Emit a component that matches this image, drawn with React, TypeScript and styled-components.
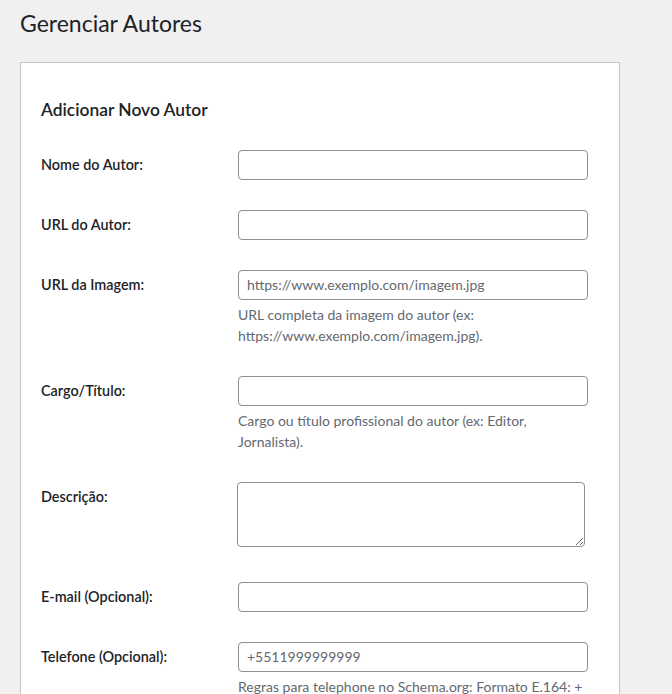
import React from "react";
import styled, { createGlobalStyle } from "styled-components";

const Global = createGlobalStyle`
  html, body { margin: 0; padding: 0; background: #f0f0f1; }
  body { font-family: "Segoe UI", Lato, "Noto Sans", sans-serif; color: #1d2327; font-size: 14px; }
  * { box-sizing: border-box; }
`;

const Wrap = styled.div`
  padding: 0 52px 0 20px;
`;

const Title = styled.h1`
  font-size: 23px;
  font-weight: 400;
  line-height: 1.3;
  margin: 0;
  padding: 9px 0 4px;
  color: #1d2327;
`;

const Card = styled.div`
  margin-top: 19px;
  width: 600px;
  background: #fff;
  border: 1px solid #c3c4c7;
  padding: 36px 20px 0 20px;
`;

const CardTitle = styled.h2`
  font-size: 17.4px;
  font-weight: 600;
  line-height: 22px;
  margin: 0 0 14px;
  color: #1d2327;
`;

const Row = styled.div`
  display: grid;
  grid-template-columns: 197px 1fr;
  padding: 15px 0;
`;

const Label = styled.label`
  font-size: 14.4px;
  font-weight: 600;
  line-height: 20px;
  padding-top: 5px;
  color: #1d2327;
`;

const Field = styled.div`
  display: flex;
  flex-direction: column;
`;

const Input = styled.input`
  width: 350px;
  height: 30px;
  border: 1px solid #8c8f94;
  border-radius: 4px;
  padding: 0 8px;
  font-family: inherit;
  font-size: 14px;
  color: #2c3338;
  background: #fff;
  margin: 0;
  &::placeholder { color: #646970; }
`;

const TextArea = styled.textarea`
  display: block;
  width: 348px;
  height: 65px;
  margin: 0 0 5px -1px;
  border: 1px solid #8c8f94;
  border-radius: 4px;
  padding: 2px 6px;
  font-family: inherit;
  font-size: 14px;
  background: #fff;
`;

const Description = styled.p`
  margin: 4px 0 0;
  max-width: 350px;
  font-size: 14px;
  line-height: 21px;
  color: #646970;
`;

type FieldDef = {
  label: string;
  placeholder?: string;
  description?: string;
  multiline?: boolean;
};

const fields: FieldDef[] = [
  { label: "Nome do Autor:" },
  { label: "URL do Autor:" },
  {
    label: "URL da Imagem:",
    placeholder: "https://www.exemplo.com/imagem.jpg",
    description: "URL completa da imagem do autor (ex: https://www.exemplo.com/imagem.jpg).",
  },
  {
    label: "Cargo/Título:",
    description: "Cargo ou título profissional do autor (ex: Editor, Jornalista).",
  },
  { label: "Descrição:", multiline: true },
  { label: "E-mail (Opcional):" },
  {
    label: "Telefone (Opcional):",
    placeholder: "+5511999999999",
    description:
      "Regras para telephone no Schema.org: Formato E.164: + código do país + código de área + número, sem espaços ou símbolos.",
  },
];

export default function App() {
  return (
    <>
      <Global />
      <Wrap>
        <Title>Gerenciar Autores</Title>
        <Card>
          <CardTitle>Adicionar Novo Autor</CardTitle>
          {fields.map((f) => (
            <Row key={f.label}>
              <Label>{f.label}</Label>
              <Field>
                {f.multiline ? (
                  <TextArea />
                ) : (
                  <Input type="text" placeholder={f.placeholder} />
                )}
                {f.description && <Description>{f.description}</Description>}
              </Field>
            </Row>
          ))}
        </Card>
      </Wrap>
    </>
  );
}
